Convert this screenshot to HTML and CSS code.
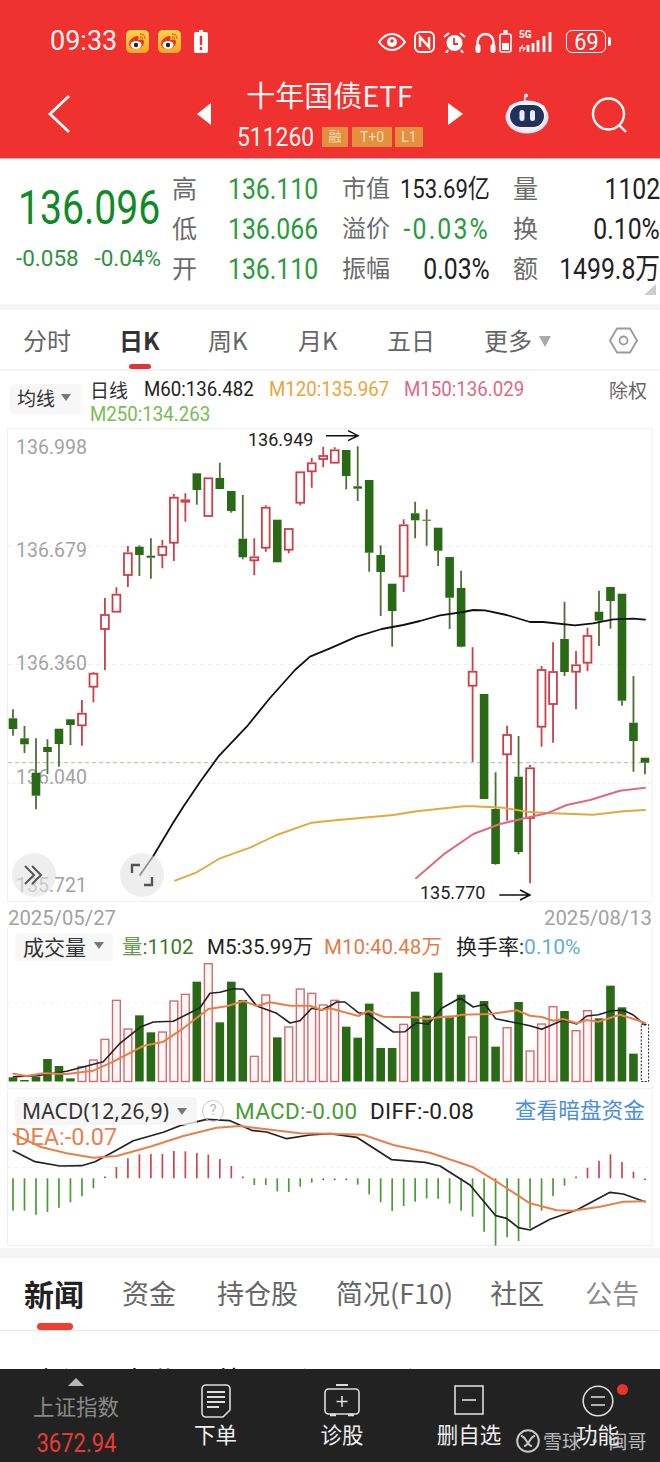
FILE: index.html
```html
<!DOCTYPE html>
<html lang="zh">
<head>
<meta charset="utf-8">
<title>十年国债ETF</title>
<link rel="stylesheet" href="styles.css">
</head>
<body>
<div class="page">
  <header class="top">
    <div class="status">
      <span class="time">09:33</span>
      <svg class="ic-weibo" viewBox="0 0 23 23"><use href="#weibo"/></svg>
      <svg class="ic-weibo second" viewBox="0 0 23 23"><use href="#weibo"/></svg>
      <svg class="ic-batwarn" viewBox="0 0 14 23"><path d="M5 0h4v2H5z" fill="#fff"/><rect y="2" width="14" height="21" rx="2" fill="#fff"/><path d="M7 6v9M7 17v3" stroke="#ee3030" stroke-width="2.4"/></svg>
      <span class="status-gap"></span>
      <svg class="ic-eye" viewBox="0 0 28 18"><path d="M1 9C6 2 10 1 14 1s8 1 13 8c-5 7-9 8-13 8S6 16 1 9z" fill="none" stroke="#fff" stroke-width="2"/><circle cx="14" cy="9" r="5" fill="#fff"/><circle cx="14" cy="8" r="1.8" fill="#ee3030"/></svg>
      <svg class="ic-nfc" viewBox="0 0 21 22"><rect x="1" y="1" width="19" height="20" rx="5" fill="none" stroke="#fff" stroke-width="2"/><path d="M6 16V6l9 10V6" fill="none" stroke="#fff" stroke-width="2.4"/></svg>
      <svg class="ic-alarm" viewBox="0 0 23 22"><circle cx="11.500" cy="12" r="8" fill="#fff"/><path d="M11 7v6h4" fill="none" stroke="#ee3030" stroke-width="1.800"/><path d="M1 6l5-4M22 6l-5-4M5 19l-2 3M18 19l2 3" stroke="#fff" stroke-width="2.200"/></svg>
      <svg class="ic-head" viewBox="0 0 21 22"><path d="M2.500 14V11a8 8 0 0 1 16 0v3" fill="none" stroke="#fff" stroke-width="2.400"/><rect x="0.500" y="13" width="5" height="9" rx="2.500" fill="#fff"/><rect x="15.500" y="13" width="5" height="9" rx="2.500" fill="#fff"/></svg>
      <svg class="ic-bat2" viewBox="0 0 13 23"><path d="M4.500 0h4v3h-4z" fill="#fff"/><rect x="1" y="4" width="11" height="18" rx="2" fill="none" stroke="#fff" stroke-width="1.600"/><rect x="3" y="13" width="7" height="7" fill="#fff"/></svg>
      <span class="net"><span class="g5">5G</span><svg class="ic-sig" viewBox="0 0 37 23"><path d="M1 17v5M4 15l-2 3h4l-2 3" stroke="#fff" stroke-width="1.200" fill="none"/><path d="M9 15v7M14 13v9M19 10v12M25 6v16M31 2v20" stroke="#fff" stroke-width="2.800"/></svg></span>
      <span class="batt"><span class="batt-num">69</span></span><span class="batt-tip"></span>
    </div>
    <div class="nav">
      <svg class="ic-back" viewBox="0 0 24 40"><path d="M22 2L3 20l19 18" fill="none" stroke="#fff" stroke-width="2.800"/></svg>
      <span class="tri-l"></span>
      <div class="title-box">
        <div class="title">十年国债ETF</div>
        <div class="sub"><span class="code">511260</span><span class="badge bd1">融</span><span class="badge bd2">T+0</span><span class="badge bd3">L1</span></div>
      </div>
      <span class="tri-r"></span>
      <svg class="ic-robot" viewBox="0 0 44 41"><path d="M20 8C19 4 20 2 22 2" fill="none" stroke="#f4e6e8" stroke-width="1.600"/><circle cx="21" cy="2.500" r="2" fill="#f4e6e8"/><ellipse cx="22" cy="24" rx="21.500" ry="16.500" fill="#e6e4f4"/><path d="M4 14C10 6 34 6 40 14c2 9 0 22-18 25C4 36 2 23 4 14z" fill="#f3f1fa"/><rect x="5" y="12" width="34" height="22" rx="11" fill="#20325a"/><rect x="14.500" y="17" width="5" height="11" rx="2.500" fill="#e8ecf6"/><rect x="25" y="17" width="5" height="11" rx="2.500" fill="#e8ecf6"/></svg>
      <svg class="ic-search" viewBox="0 0 37 36"><circle cx="17.500" cy="17" r="15.500" fill="none" stroke="#fff" stroke-width="2.400"/><path d="M28 28l7 7" stroke="#fff" stroke-width="2.400"/></svg>
    </div>
  </header>

  <section class="quote">
    <div class="price">
      <div class="last">136.096</div>
      <div class="chg"><span>-0.058</span><span>-0.04%</span></div>
    </div>
    <div class="stats">
      <span class="lab big">高</span><span class="num green">136.110</span>
      <span class="cell"><span class="lab">市值</span><span class="num mid">153.69亿</span></span><span class="sp"></span>
      <span class="cell"><span class="lab big">量</span><span class="num">1102</span></span>
      <span class="lab big">低</span><span class="num green">136.066</span>
      <span class="cell"><span class="lab">溢价</span><span class="num green spaced">-0.03%</span></span><span class="sp"></span>
      <span class="cell"><span class="lab big">换</span><span class="num">0.10%</span></span>
      <span class="lab big">开</span><span class="num green">136.110</span>
      <span class="cell"><span class="lab">振幅</span><span class="num">0.03%</span></span><span class="sp"></span>
      <span class="cell"><span class="lab big">额</span><span class="num">1499.8万</span></span>
    </div>
    <span class="corner"></span>
  </section>
  <div class="band"></div>

  <nav class="tabs">
    <span class="tab t1">分时</span>
    <span class="tab t2 on">日K</span>
    <span class="tab t3">周K</span>
    <span class="tab t4">月K</span>
    <span class="tab t5">五日</span>
    <span class="tab t6">更多<i class="caret"></i></span>
    <svg class="ic-hex" viewBox="0 0 29 27"><path d="M8 1.500h13l7 12-7 12H8l-7-12z" fill="none" stroke="#999" stroke-width="1.800" stroke-linejoin="round"/><circle cx="14.500" cy="13.500" r="4" fill="none" stroke="#999" stroke-width="1.800"/></svg>
  </nav>

  <div class="legend">
    <span class="pick"><span>均线</span><i class="caret-s"></i></span>
    <div class="ma">
      <div class="ma-row"><span class="ma-day">日线</span><span class="ma-k c60">M60:136.482</span><span class="ma-k c120">M120:135.967</span><span class="ma-k c150">M150:136.029</span></div>
      <div class="ma-row"><span class="ma-k c250">M250:134.263</span></div>
    </div>
    <span class="fq">除权</span>
  </div>

  <div class="kchart">
    <span class="ax a1">136.998</span>
    <span class="ax a2">136.679</span>
    <span class="ax a3">136.360</span>
    <span class="ax a4">136.040</span>
    <span class="ax a5">135.721</span>
    <svg id="k" class="plot" viewBox="0 428 660 474"></svg>
    <span class="mark m1">136.949</span>
    <span class="mark m2">135.770</span>
    <span class="round r1"><svg viewBox="0 0 24 24"><path d="M3 3l9 9-9 9M10 3l9 9-9 9" fill="none" stroke="#555" stroke-width="2"/></svg></span>
    <span class="round r2"><svg viewBox="0 0 24 24"><path d="M10 2H2v8M14 22h8v-8" fill="none" stroke="#555" stroke-width="2.400"/></svg></span>
  </div>
  <div class="dates"><span>2025/05/27</span><span>2025/08/13</span></div>

  <div class="vol">
    <div class="vol-head">
      <span class="pick wide"><span>成交量</span><i class="caret-s"></i></span>
      <span class="vh v1"><b>量</b>:1102</span>
      <span class="vh v2">M5:35.99万</span>
      <span class="vh v3">M10:40.48万</span>
      <span class="vh v4">换手率:<em>0.10%</em></span>
    </div>
    <svg id="v" class="plot" viewBox="0 928 660 162"></svg>
  </div>

  <div class="macd">
    <svg id="m" class="plot" viewBox="0 1090 660 158"></svg>
    <div class="macd-head">
      <span class="pick macd-pick"><span>MACD(12,26,9)</span><i class="caret-s"></i></span>
      <span class="help">?</span>
      <span class="mh m-g">MACD:-0.00</span>
      <span class="mh m-d">DIFF:-0.08</span>
      <span class="mh m-link">查看暗盘资金</span>
    </div>
    <span class="dea">DEA:-0.07</span>
  </div>
  <div class="band band-low"></div>

  <nav class="news">
    <span class="n-tab active">新闻</span>
    <span class="n-tab">资金</span>
    <span class="n-tab">持仓股</span>
    <span class="n-tab">简况(F10)</span>
    <span class="n-tab">社区</span>
    <span class="n-tab fade">公告</span>
  </nav>
  <div class="article"><p>上证10年期国债ETF(511010)8月13日</p></div>

  <footer class="bar">
    <div class="index"><i class="up"></i><span class="idx-name">上证指数</span><span class="idx-val">3672.94</span></div>
    <div class="act a-order">
      <svg viewBox="0 0 30 34"><path d="M5 1h20a4 4 0 0 1 4 4v21l-7 7H5a4 4 0 0 1-4-4V5a4 4 0 0 1 4-4z" fill="none" stroke="#ddd" stroke-width="1.600"/><path d="M6 8h18M6 13h18M6 18h18M6 23h12" stroke="#ddd" stroke-width="1.800"/></svg>
      <span>下单</span>
    </div>
    <div class="act a-diag">
      <svg viewBox="0 0 36 34"><path d="M12 1h12" stroke="#ddd" stroke-width="2"/><rect x="1" y="5" width="34" height="25" rx="3.500" fill="none" stroke="#ddd" stroke-width="1.600"/><path d="M18 12v11M12.500 17.500h11" stroke="#ddd" stroke-width="1.600"/><path d="M6 31h6M24 31h6" stroke="#ddd" stroke-width="2.400"/></svg>
      <span>诊股</span>
    </div>
    <div class="act a-del">
      <svg viewBox="0 0 30 30"><rect x="1" y="1" width="28" height="28" fill="none" stroke="#ddd" stroke-width="1.600"/><path d="M8 15h14" stroke="#ddd" stroke-width="1.600"/></svg>
      <span>删自选</span>
    </div>
    <div class="act a-fn">
      <svg viewBox="0 0 32 32"><circle cx="16" cy="16" r="14.800" fill="none" stroke="#ddd" stroke-width="1.600"/><path d="M9 12h14M9 20h14" stroke="#ddd" stroke-width="1.600"/></svg>
      <span>功能</span>
      <i class="dot"></i>
    </div>
    <div class="wm">
      <svg viewBox="0 0 24 24"><circle cx="12" cy="12" r="10.800" fill="none" stroke="#c8c8c8" stroke-width="2"/><path d="M5 7c5 0 6 10 11 10M19 7c-5 0-6 10-11 10" fill="none" stroke="#c8c8c8" stroke-width="2"/></svg>
      <span>雪球 · 闽哥</span>
    </div>
  </footer>
</div>

<svg class="defs" width="0" height="0"><defs>
  <linearGradient id="wbg" x1="0" y1="0" x2="0" y2="1"><stop offset="0" stop-color="#ffd34e"/><stop offset="1" stop-color="#f6a723"/></linearGradient>
  <symbol id="weibo" viewBox="0 0 23 23">
    <rect width="23" height="23" rx="5" fill="url(#wbg)"/>
    <path d="M3 14c0-4 5-8 8-8 2 0 2 2 1 4 3-1 6-1 6 2 0 4-4 7-8 7s-7-2-7-5z" fill="#e23a1e"/>
    <ellipse cx="10" cy="15" rx="5.500" ry="4" fill="#fff"/>
    <circle cx="10" cy="15" r="2.200" fill="#222"/>
    <path d="M14 4c3 0 5 2 5 5M14 7c1.500 0 2.500 1 2.500 2.500" fill="none" stroke="#e27a1e" stroke-width="1.300"/>
  </symbol>
</defs></svg>
<script src="chart.js"></script>
</body>
</html>
```

FILE: styles.css
```css
* { box-sizing: border-box; }
html, body { margin: 0; padding: 0; background: #fff; }
body { font-family: "Noto Sans CJK SC", "Noto Sans", sans-serif; }
i, em, b { font-style: normal; font-weight: inherit; }
.page { width: 660px; height: 1462px; overflow: hidden; display: flex; flex-direction: column; }
.defs { position: absolute; }

/* header */
.top { height: 159px; flex: none; background: #ef3230; border-bottom: 1px solid #c9b3b3; color: #fff; }
.status { display: flex; align-items: center; height: 23px; margin-top: 30px; padding-left: 50px; }
.time { font: 400 27px/23px Roboto, sans-serif; width: 68px; color: #fdf3f0; }
.ic-weibo { width: 23px; height: 23px; margin-left: 8px; flex: none; }
.ic-weibo.second { margin-left: 9px; }
.ic-batwarn { width: 14px; height: 23px; margin-left: 13px; }
.status-gap { width: 170px; }
.ic-eye { width: 28px; height: 18px; }
.ic-nfc { width: 21px; height: 22px; margin-left: 8px; }
.ic-alarm { width: 23px; height: 22px; margin-left: 8px; }
.ic-head { width: 21px; height: 22px; margin-left: 9px; }
.ic-bat2 { width: 13px; height: 23px; margin-left: 3px; }
.net { position: relative; width: 37px; height: 23px; margin-left: 7px; }
.g5 { position: absolute; left: 0; top: -1px; font: 700 10px/11px Roboto, sans-serif; }
.ic-sig { width: 37px; height: 23px; display: block; }
.batt { width: 40px; height: 23px; margin-left: 10px; border: 1.500px solid #fff; border-radius: 6px; display: flex; align-items: center; justify-content: center; }
.batt-num { font: 400 24px/20px Roboto, sans-serif; transform: scaleX(.9); }
.batt-tip { width: 3px; height: 9px; background: #fff; margin-left: 2px; border-radius: 0 2px 2px 0; }

.nav { display: flex; align-items: flex-start; padding-left: 47px; height: 87px; margin-top: 8px; }
.ic-back { width: 24px; height: 40px; margin-top: 33px; flex: none; }
.tri-l { width: 0; height: 0; margin: 42px 0 0 126px; border-style: solid; border-width: 11px 14px 11px 0; border-color: transparent #fff transparent transparent; }
.tri-r { width: 0; height: 0; margin: 42px 0 0 0; border-style: solid; border-width: 11px 0 11px 15px; border-color: transparent transparent transparent #fff; }
.title-box { width: 237px; display: flex; flex-direction: column; align-items: center; }
.title { font-size: 29px; line-height: 36px; margin-top: 15px; color: #fdf4f2; }
.sub { display: flex; align-items: center; height: 20px; margin-top: 15px; margin-left: 1px; }
.code { width: 85px; font: 400 26px/20px Roboto, sans-serif; transform: scaleX(.88); transform-origin: left center; color: #fdf4f2; }
.badge { height: 20px; background: #e4913f; color: #f6dcb7; font: 400 14px/20px Roboto, "Noto Sans CJK SC", sans-serif; text-align: center; }
.bd1 { width: 26px; font-size: 13px; }
.bd2 { width: 40px; margin-left: 4px; }
.bd3 { width: 28px; margin-left: 3px; }
.ic-robot { width: 44px; height: 41px; margin: 32px 0 0 42px; flex: none; }
.ic-search { width: 37px; height: 36px; margin: 36px 0 0 42px; flex: none; }

/* quote */
.quote { position: relative; height: 145px; flex: none; display: flex; padding-top: 10px; background: #fff; }
.price { width: 172px; flex: none; padding-left: 16px; }
.last { width: 170px; height: 50px; margin: 14px 0 0 2px; font: 400 48px/50px Roboto, sans-serif; color: #0f8a27; transform: scaleX(.815); transform-origin: left center; white-space: nowrap; }
.chg { display: flex; justify-content: space-between; width: 145px; margin-top: 12px; font: 400 22.500px/26px Roboto, sans-serif; color: #2f9240; }
.stats { display: grid; grid-template-columns: 56px 114px 148px 23px 147px; grid-auto-rows: 40px; align-items: center; }
.lab { color: #6b6b6b; font-size: 24px; line-height: 36px; margin-bottom: 4px; flex: none; }
.lab.big { font-size: 25px; }
.num { font: 400 29px/40px Roboto, "Noto Sans CJK SC", sans-serif; color: #222; white-space: nowrap; transform: scaleX(.855); transform-origin: left center; }
.cell .num { flex: none; margin-left: -40px; transform-origin: right center; }
.num.mid { font-size: 26px; transform: scaleX(.85); }
.num.spaced { letter-spacing: 2.500px; }
.num.green { color: #2a9a3c; }
.cell { display: flex; justify-content: space-between; align-items: center; height: 40px; }
.corner { position: absolute; right: 4px; bottom: 9px; width: 0; height: 0; border-style: solid; border-width: 0 0 11px 12px; border-color: transparent transparent #ccc transparent; }
.band { height: 6px; flex: none; background: #f5f5f5; }
.band-low { height: 10px; }

/* tabs */
.tabs { position: relative; height: 61px; flex: none; border-bottom: 2px solid #f3f3f3; }
.tab { position: absolute; top: 13px; font: 400 24px/34px "Noto Sans CJK SC", sans-serif; color: #666; white-space: nowrap; }
.t1 { left: 23px; } .t2 { left: 119px; } .t3 { left: 208px; } .t4 { left: 298px; } .t5 { left: 387px; } .t6 { left: 484px; }
.tab.on { color: #333; font-weight: 700; }
.tab.on::after { content: ""; position: absolute; left: 10px; top: 41px; width: 22px; height: 5px; border-radius: 3px; background: #e5313a; }
.caret { display: inline-block; margin-left: 7px; vertical-align: 3px; width: 0; height: 0; border-style: solid; border-width: 11px 6.500px 0; border-color: #aaa transparent transparent; }
.ic-hex { position: absolute; left: 609px; top: 17px; width: 29px; height: 27px; }

/* legend */
.legend { position: relative; height: 57px; flex: none; display: flex; padding: 6px 0 0 10px; }
.pick { display: flex; align-items: center; background: #f7f7f7; border-radius: 4px; color: #333; }
.legend .pick { width: 71px; height: 30px; margin-top: 7px; font-size: 19px; padding: 0 0 3px 7px; }
.caret-s { display: inline-block; width: 0; height: 0; margin-left: 6px; border-style: solid; border-width: 7px 5px 0; border-color: #777 transparent transparent; }
.ma { margin-left: 9px; width: 500px; }
.ma-row { display: flex; height: 25px; align-items: center; white-space: nowrap; }
.ma-day { font-size: 19px; width: 54px; color: #333; }
.ma-k { font: 400 21px/25px Roboto, sans-serif; transform: scaleX(.89); transform-origin: left center; }
.c60 { color: #222; width: 125px; }
.c120 { color: #e8a63a; width: 135px; }
.c150 { color: #dc6a86; }
.c250 { color: #7abb55; }
.fq { font-size: 19px; line-height: 25px; color: #666; margin-left: 19px; }

/* k chart */
.kchart { position: relative; height: 474px; flex: none; }
.plot { position: relative; display: block; width: 660px; height: 100%; }
.ax { position: absolute; left: 16px; font: 400 19.500px/20px Roboto, sans-serif; color: #a2a2a2; }
.a1 { top: 10px; } .a2 { top: 113px; } .a3 { top: 226px; } .a4 { top: 340px; } .a5 { top: 448px; }
.mark { position: absolute; font: 400 18px/20px Roboto, sans-serif; color: #222; }
.m1 { left: 248px; top: 2px; }
.m2 { left: 420px; top: 455px; }
.round { position: absolute; width: 44px; height: 44px; border-radius: 50%; background: rgba(228,228,228,.62); display: flex; align-items: center; justify-content: center; }
.round svg { width: 24px; height: 24px; }
.r1 { left: 12px; top: 425px; }
.r2 { left: 120px; top: 425px; }
.dates { height: 26px; flex: none; display: flex; justify-content: space-between; padding: 0 8px; font: 400 20.300px/32px Roboto, sans-serif; color: #a2a2a2; }

/* volume */
.vol { position: relative; height: 162px; flex: none; }
.vol-head { position: absolute; left: 15px; top: 5px; right: 0; height: 28px; display: flex; align-items: center; z-index: 2; }
.pick.wide { width: 98px; height: 28px; padding: 0 0 3px 8px; font-size: 21px; flex: none; }
.pick.wide .caret-s { margin-left: 8px; }
.vh { font: 400 20.500px/28px Roboto, "Noto Sans CJK SC", sans-serif; white-space: nowrap; }
.v1 { margin-left: 9px; width: 85px; color: #3d7a22; }
.v1 b { color: #6a9a52; }
.v2 { width: 117px; color: #222; }
.v3 { width: 132px; color: #e07c48; }
.v4 { color: #222; font-size: 21px; }
.v4 em { color: #62aed6; }

/* macd */
.macd { position: relative; height: 158px; flex: none; }
.macd-head { position: absolute; left: 15px; top: 7px; right: 15px; height: 28px; display: flex; align-items: center; }
.macd-pick { width: 182px; height: 28px; padding-left: 7px; font: 400 21px/28px "Noto Sans", sans-serif; letter-spacing: .2px; flex: none; background: rgba(244,244,244,.8); }
.macd-pick .caret-s { margin-left: 8px; }
.help { width: 22px; height: 22px; margin-left: 5px; border: 1.500px solid #ccc; border-radius: 50%; font: 400 15px/19px Roboto, sans-serif; color: #bbb; text-align: center; flex: none; }
.mh { font: 400 22.500px/28px Roboto, "Noto Sans CJK SC", sans-serif; white-space: nowrap; letter-spacing: .3px; }
.m-g { margin-left: 11px; color: #4a9a35; width: 135px; }
.m-d { color: #222; }
.m-link { margin-left: auto; color: #4b8fd6; font-size: 21.700px; letter-spacing: 0; }
.dea { position: absolute; left: 15px; top: 34px; font: 400 23.500px/26px Roboto, sans-serif; color: #e58250; }

/* news */
.news { position: relative; height: 73px; flex: none; display: flex; border-bottom: 1px solid #e6e6e6; padding-top: 15px; }
.n-tab { font-size: 27px; line-height: 40px; color: #666; white-space: nowrap; margin-left: 41px; }
.n-tab:first-child { margin-left: 24px; }
.n-tab:nth-child(4) { margin-left: 38px; }
.n-tab:nth-child(5) { margin-left: 37px; }
.n-tab:nth-child(6) { margin-left: 41px; }
.n-tab.active { font-size: 30px; font-weight: 700; color: #222; margin-right: -3px; }
.n-tab.active::after { content: ""; position: absolute; left: 37px; bottom: 0; width: 36px; height: 7px; border-radius: 4px; background: #f13c30; }
.n-tab.fade { color: #8e8e8e; }
.article { height: 38px; flex: none; overflow: hidden; padding: 29px 0 0 32px; }
.article p { margin: 0; font-size: 30px; line-height: 40px; color: #111; white-space: nowrap; }

/* bottom bar */
.bar { position: relative; height: 94px; flex: none; background: #222; display: flex; }
.act { position: absolute; top: 15px; display: flex; flex-direction: column; align-items: center; color: #eee; font-size: 21.500px; line-height: 30px; white-space: nowrap; }
.act svg { display: block; }
.index { width: 152px; flex: none; display: flex; flex-direction: column; align-items: center; }
.up { margin-top: 9px; width: 0; height: 0; border-style: solid; border-width: 0 8px 8px; border-color: transparent transparent #b5b5b5; }
.idx-name { margin-top: 4px; font-size: 21.500px; line-height: 32px; color: #8a8a8a; }
.idx-val { font: 400 25px/30px Roboto, sans-serif; color: #ea3a33; margin-top: 7px; transform: scaleX(.88); }
.a-order { left: 194px; width: 43px; }
.a-order svg { width: 30px; height: 34px; }
.a-diag { left: 321px; width: 42px; }
.a-diag svg { width: 36px; height: 34px; }
.a-del { left: 437px; width: 64px; }
.a-del svg { width: 30px; height: 30px; margin: 1px 0 3px; }
.a-fn { left: 576px; width: 43px; }
.a-fn svg { width: 32px; height: 32px; margin: 1px 0; }
.act span { margin-top: 1px; }
.dot { position: absolute; left: 41px; top: 0; width: 11px; height: 11px; border-radius: 50%; background: #e8322e; }
.wm { position: absolute; left: 516px; top: 60px; display: flex; align-items: center; gap: 3px; color: rgba(225,225,225,.8); font-size: 19px; line-height: 24px; white-space: nowrap; }
.wm svg { width: 24px; height: 24px; }
```

FILE: chart.js
```js
var NS = 'http://www.w3.org/2000/svg';
var RED = '#cb3f48', GRN = '#2a6a17', WICK = '#4f6e36';
function X(i) { return 13 + 11.49 * i; }
function el(svg, name, attrs) {
  var e = document.createElementNS(NS, name);
  for (var k in attrs) e.setAttribute(k, attrs[k]);
  svg.appendChild(e);
  return e;
}
function smooth(pts) {
  var d = 'M' + pts[0][0].toFixed(1) + ' ' + pts[0][1].toFixed(1);
  for (var i = 1; i < pts.length; i++) {
    d += 'L' + pts[i][0].toFixed(1) + ' ' + pts[i][1].toFixed(1);
  }
  return d;
}
function zoomPts(list, x0, y0) {
  return list.map(function (p) { return [x0 + p[0] / 3, y0 + p[1] / 3]; });
}
function poly(svg, pts, color, w) {
  el(svg, 'path', { d: smooth(pts), fill: 'none', stroke: color, 'stroke-width': w, 'stroke-linejoin': 'round', 'stroke-linecap': 'round' });
}

/* kind, wick top, body top, body bottom, wick bottom */
var candles = [
  ['g',709.3,718.3,729,735.7],['g',726,738.3,744.3,753],['g',738.3,772.7,795.7,809.3],['g',739.3,747,752,774],
  ['g',728.7,728.7,744,766.7],['g',719.3,719.3,725,745],['r',700,712.7,725.3,745.7],['r',672,672.7,686.7,702.3],
  ['r',598,614,629,670],['r',587.3,593.7,611.7,612],['r',546,552.3,575,587],['g',545.3,546.7,555,576],
  ['g',538.3,555.7,557.7,578.7],['r',540,545.7,555,568.3],['r',494,496.7,542.7,561],['r',493.3,499.3,501.7,521.7],
  ['g',473.3,473.3,490,504.7],['r',477.3,477.3,516,516],['g',462.7,478,489,489.3],['g',491,491,511,512.7],
  ['g',495,538.7,557.3,559.3],['r',538.3,556.3,560.3,575.3],['r',505.3,506.7,547.7,551.7],['g',519.7,519.7,562.3,562.3],
  ['r',528,528,549.7,553.3],['r',471.3,471.3,502.7,505.3],['r',457.7,462.3,471.3,487.7],['r',446.7,455,459,467.3],
  ['r',447.3,449.3,462.7,463],['g',450,450,476,489.3],['g',446.3,486.3,488.7,501],['g',480,480,552.7,571.7],
  ['g',545.3,555,572,616],['g',583.7,583.7,611,646.7],['r',519.3,524.3,576.3,592],['g',501.7,513.3,520.3,538.3],
  ['g',509.3,519.7,520.7,545.7],['g',527.7,527.7,550.7,566],['g',557,557,597.7,629],['g',570.7,588,646.7,647.3],
  ['r',647.3,670.7,685.7,761.7],['g',694,694,799,799],['g',772.3,809,864,864.7],['r',725.7,734,754.3,820.7],
  ['g',736,776.7,852,854.3],['r',765,767.3,818,883.3],['r',666,669,726.7,746.7],['r',642.3,671,704,742.7],
  ['g',601.7,639,672,676],['r',651,664.3,671.7,709.3],['r',627.7,635,662.7,671],['g',590.7,611.7,620.7,646],
  ['g',587,587,601,628.7],['g',593.7,593.7,700.7,705.7],['g',676,722.7,741,771.7],['g',757.7,757.7,762.7,774.3]
];

var k = document.getElementById('k');
el(k, 'rect', { x: 7.5, y: 428.5, width: 644.5, height: 473, fill: 'none', stroke: '#f0f0f0' });
[546.7, 664.5].forEach(function (y) {
  el(k, 'path', { d: 'M8 ' + y + 'H652', stroke: '#ececec', 'stroke-dasharray': '4 4' });
});
el(k, 'path', { d: 'M8 783.3H652', stroke: '#e8e8e8', 'stroke-dasharray': '2 3' });
el(k, 'path', { d: 'M8 762.7H652', stroke: '#b8b8a0', 'stroke-dasharray': '4 3', 'stroke-width': 1 });

candles.forEach(function (c, i) {
  var x = X(i), up = c[0] === 'r';
  el(k, 'path', { d: 'M' + x + ' ' + c[1] + 'V' + c[2] + 'M' + x + ' ' + c[3] + 'V' + c[4], stroke: up ? RED : WICK, 'stroke-width': 1.8 });
  if (up) {
    el(k, 'rect', { x: x - 3.9, y: c[2] + 1, width: 7.8, height: Math.max(c[3] - c[2] - 1, 1), fill: '#fff', stroke: RED, 'stroke-width': 1.8 });
  } else {
    el(k, 'rect', { x: x - 4.3, y: c[2], width: 8.6, height: Math.max(c[3] - c[2], 1), fill: GRN });
  }
});

poly(k, [[140,875],[153.3,856],[173,823],[183.3,806.7],[200,782],[218.3,756.7],[246.7,726.7],[270,698],[295,670],[310,656.7],[330,648.3],[356.7,636.7],[381.7,629],[403.3,625],[420,621],[440,615.3],[463.3,612],[473.3,610],[485,610.3],[506.7,615],[530,622],[543.3,622],[575,625.3],[593,623.3],[613.3,619.3],[633.3,618.7],[645,619.7]], '#111', 1.8);
poly(k, [[175,880.7],[196.7,872.3],[220,858.3],[250,847.7],[276.7,835],[311.7,822.7],[330,820.7],[393.3,815],[416.7,811.3],[463.3,806.3],[473.3,806.3],[503.3,807.7],[526.7,811.7],[546.7,813],[593.3,814.7],[623.3,811.3],[645,810]], '#e2a93c', 1.9);
poly(k, [[416,878.3],[445,853.3],[473.3,834],[500,824],[530,817],[546.7,813.3],[566.7,805],[590,800],[620,790.7],[645,787.7]], '#de6a80', 2);
[[326,358,435.7],[499.3,530,895]].forEach(function (a) {
  el(k, 'path', { d: 'M' + a[0] + ' ' + a[2] + 'H' + a[1] + 'M' + (a[1] - 10) + ' ' + (a[2] - 5) + 'L' + a[1] + ' ' + a[2] + 'L' + (a[1] - 10) + ' ' + (a[2] + 5), fill: 'none', stroke: '#111', 'stroke-width': 1.5 });
});

/* volume: top of each bar in crop pixels, 3x from y=930 */
var vols = [442,450,440,387,408,445,408,388,326,209,295,256,307,304,211,191,155,99,277,155,210,377,193,322,289,175,188,223,209,290,323,221,354,354,281,185,257,128,257,194,319,213,350,291,216,361,280,228,243,300,240,265,167,232,371,283];
var v = document.getElementById('v');
el(v, 'path', { d: 'M7.5 928V1088.5H652V928', fill: 'none', stroke: '#f0f0f0' });
el(v, 'path', { d: 'M8 1003H652', stroke: '#f0f0f0', 'stroke-dasharray': '3 4' });
vols.forEach(function (t, i) {
  var x = X(i), top = 930 + t / 3, base = 1081.5;
  if (i === 55) {
    el(v, 'rect', { x: x - 3.7, y: top, width: 7.4, height: base - top, fill: '#fff', stroke: '#222', 'stroke-width': 1, 'stroke-dasharray': '2 1.500' });
  } else if (candles[i][0] === 'r') {
    el(v, 'rect', { x: x - 3.9, y: top + 0.7, width: 7.8, height: base - top - 0.7, fill: '#fff6f6', stroke: '#cf6d72', 'stroke-width': 1.4 });
  } else {
    el(v, 'rect', { x: x - 4.3, y: top, width: 8.6, height: base - top, fill: GRN });
  }
});
var vb = zoomPts([[40,440],[110,437],[200,424],[310,395],[360,340],[420,292],[460,276],[520,274],[600,233],[630,190],[660,187],[700,176],[730,178],[770,228],[830,250],[870,279],[900,272],[935,235],[965,240]], 0, 930)
  .concat(zoomPts([[0,228],[20,216],[45,216],[85,248],[115,252],[190,306],[225,305],[260,278],[295,283],[335,235],[390,204],[430,231],[465,223],[497,266],[600,287],[635,298],[700,270],[740,282],[770,258],[805,254],[845,242],[880,241],[910,255],[945,285]], 330, 930));
var vo = zoomPts([[40,431],[80,438],[130,430],[200,432],[280,422],[340,395],[430,348],[490,335],[550,295],[625,237],[680,229],[730,213],[770,228],[810,217],[870,227],[930,227],[965,240]], 0, 930)
  .concat(zoomPts([[0,235],[85,258],[115,243],[160,260],[260,262],[290,268],[335,260],[360,262],[395,254],[480,252],[560,241],[600,257],[635,261],[670,272],[700,267],[740,280],[770,270],[805,275],[870,254],[920,270],[945,279]], 330, 930));
poly(v, vb, '#222', 1.6);
poly(v, vo, '#e8804c', 2);

/* macd histogram: crop pixels, 3x from y=1090, zero at 265 */
var hist = [362,362,374,366,353,337,319,295,262,231,205,193,192,192,183,184,189,194,207,228,262,285,285,304,306,290,278,268,268,268,284,313,337,363,348,335,325,326,341,362,380,425,467,442,453,415,362,318,287,262,233,212,193,216,245,268];
var m = document.getElementById('m');
el(m, 'path', { d: 'M7.5 1090V1245.5H652V1090', fill: 'none', stroke: '#eeeeee' });
el(m, 'path', { d: 'M8 1167.5H652', stroke: '#f0f0f0', 'stroke-dasharray': '3 4' });
hist.forEach(function (t, i) {
  var x = X(i), zero = 1178.3, y = 1090 + t / 3;
  if (t === 262 || t === 268) {
    el(m, 'rect', { x: x - 0.8, y: y - 0.8, width: 1.6, height: 1.6, fill: '#555' });
  } else {
    el(m, 'path', { d: 'M' + x + ' ' + zero + 'V' + y, stroke: y < zero ? '#c9474f' : '#4a9a35', 'stroke-width': 1.7 });
  }
});
var mb = zoomPts([[40,182],[105,215],[180,228],[245,227],[285,215],[345,183],[400,152],[490,127],[540,107],[620,88],[690,92],[755,121],[800,126],[860,146],[930,135],[990,131]], 0, 1090)
  .concat(zoomPts([[80,142],[185,209],[285,217],[330,228],[420,285],[497,377],[530,385],[565,413],[600,420],[660,388],[740,360],[840,307],[880,312],[945,335]], 330, 1090));
var mo = zoomPts([[40,132],[120,170],[200,190],[280,203],[350,198],[450,170],[550,138],[650,113],[720,108],[800,118],[900,130],[990,131]], 0, 1090)
  .concat(zoomPts([[100,134],[190,165],[300,188],[430,232],[500,275],[600,340],[680,361],[730,362],[810,350],[880,335],[945,334]], 330, 1090));
poly(m, mb, '#222', 1.7);
poly(m, mo, '#e8804c', 2);
```
